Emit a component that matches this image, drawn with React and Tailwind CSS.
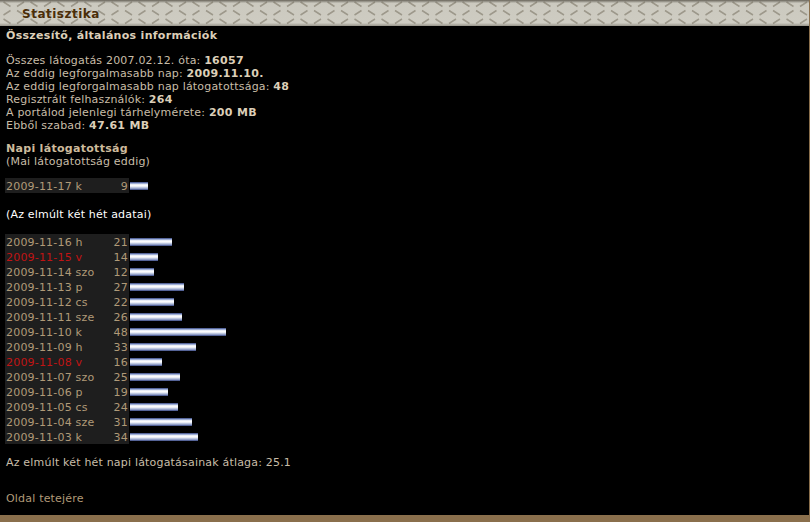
const recent = [
  ["2009-11-16 h", 21],
  ["2009-11-15 v", 14, true],
  ["2009-11-14 szo", 12],
  ["2009-11-13 p", 27],
  ["2009-11-12 cs", 22],
  ["2009-11-11 sze", 26],
  ["2009-11-10 k", 48],
  ["2009-11-09 h", 33],
  ["2009-11-08 v", 16, true],
  ["2009-11-07 szo", 25],
  ["2009-11-06 p", 19],
  ["2009-11-05 cs", 24],
  ["2009-11-04 sze", 31],
  ["2009-11-03 k", 34],
];

function Row({ date, count, sunday }) {
  return (
    <div className="flex h-[15px]">
      <div className="flex justify-between w-[124px] h-full bg-[#1e1e1e] px-px pt-[2px] text-[#b09a78]">
        <span className={sunday ? "text-[#c01414]" : ""}>{date}</span>
        <span>{count}</span>
      </div>
      <div
        className="ml-px mt-[4px] h-2 bg-[linear-gradient(to_bottom,#33427c,#93a5d2,#f4f6fb,#ffffff,#c4cde4,#8c9ac4,#33427c)]"
        style={{ width: count * 2 }}
      />
    </div>
  );
}

function Stat({ label, value }) {
  return (
    <p>
      {label} <b className="text-[#dccfb8] tracking-[0.3px]">{value}</b>
    </p>
  );
}

export default function App() {
  return (
    <div className="w-[810px] h-[522px] bg-black flex flex-col overflow-hidden border-r border-[#8a6f4c] font-['DejaVu_Sans',sans-serif] text-[11px] tracking-[0.19px] leading-[13px] text-[#c8bda8]">
      <div className="relative h-[26px] shrink-0 bg-[#d2d0c6]">
        <svg className="absolute inset-0" width="809" height="26">
          <defs>
            <pattern id="plate" width="27" height="17" patternUnits="userSpaceOnUse">
              <path d="M3.5 2l7 4.5M17 6.5l7-4.5M3.5 15l7-4.5M17 10.5l7 4.5" stroke="#8f897a" strokeWidth="1.5" opacity="0.75" />
            </pattern>
            <linearGradient id="shade" x1="0" y1="0" x2="0" y2="1">
              <stop offset="0" stopColor="#4e4a40" stopOpacity="0.8" />
              <stop offset="0.12" stopColor="#4e4a40" stopOpacity="0.05" />
              <stop offset="0.88" stopColor="#4e4a40" stopOpacity="0.03" />
              <stop offset="1" stopColor="#4e4a40" stopOpacity="0.45" />
            </linearGradient>
            <filter id="soft">
              <feGaussianBlur stdDeviation="0.5" />
            </filter>
          </defs>
          <rect width="809" height="26" fill="url(#plate)" filter="url(#soft)" />
          <rect width="809" height="26" fill="url(#shade)" />
        </svg>
        <span className="absolute left-[22px] top-[8px] text-[12px] tracking-[0.5px] font-bold text-[#4a2d08]">Statisztika</span>
      </div>

      <div className="flex-1 pl-[6px] pt-[3px]">
        <h2 className="font-bold tracking-[0.3px] text-[#dccfb8]">Összesítő, általános információk</h2>
        <div className="mt-[12px]">
          <Stat label="Összes látogatás 2007.02.12. óta:" value="16057" />
          <Stat label="Az eddig legforgalmasabb nap:" value="2009.11.10." />
          <Stat label="Az eddig legforgalmasabb nap látogatottsága:" value="48" />
          <Stat label="Regisztrált felhasználók:" value="264" />
          <Stat label="A portálod jelenlegi tárhelymérete:" value="200 MB" />
          <Stat label="Ebből szabad:" value="47.61 MB" />
        </div>

        <h3 className="mt-[10px] font-bold tracking-[0.3px] text-[#cdbb9c]">Napi látogatottság</h3>
        <p>(Mai látogatottság eddig)</p>

        <div className="mt-[10px] -ml-px">
          <Row date="2009-11-17 k" count={9} />
        </div>

        <p className="mt-[15px] text-white">(Az elmúlt két hét adatai)</p>

        <div className="mt-[13px] -ml-px">
          {recent.map(([date, count, sunday]) => (
            <Row key={date} date={date} count={count} sunday={sunday} />
          ))}
        </div>

        <p className="mt-[12px]">Az elmúlt két hét napi látogatásainak átlaga: 25.1</p>
        <a className="block mt-[23px] text-[#b09a78]">Oldal tetejére</a>
      </div>

      <div className="h-[7px] shrink-0 bg-[#8a6f4c]" />
    </div>
  );
}
